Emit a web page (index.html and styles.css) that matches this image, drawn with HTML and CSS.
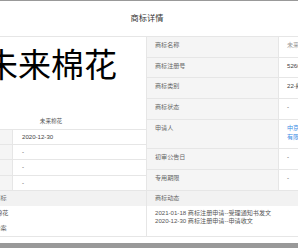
FILE: index.html
```html
<!DOCTYPE html>
<html lang="zh-CN">
<head>
    <meta charset="UTF-8">
    <meta name="viewport" content="width=device-width, initial-scale=1.0">
    <title>商标详情</title>
    <link rel="stylesheet" href="styles.css">
</head>
<body>
    <div class="modal">
        <div class="modal-header">商标详情</div>

        <div class="detail">
            <div class="detail-left">
                <div class="mark-image">
                    <div class="mark-text">未来棉花</div>
                    <div class="mark-caption">未来棉花</div>
                </div>
                <div class="info info-left">
                    <div class="info-label">申请日期</div>
                    <div class="info-value">2020-12-30</div>
                    <div class="info-label">注册公告日</div>
                    <div class="info-value">-</div>
                    <div class="info-label">国际注册日</div>
                    <div class="info-value">-</div>
                    <div class="info-label">后期指定日</div>
                    <div class="info-value">-</div>
                </div>
            </div>

            <div class="info info-right">
                <div class="info-label">商标名称</div>
                <div class="info-value muted">未来棉花</div>
                <div class="info-label">商标注册号</div>
                <div class="info-value">52600000</div>
                <div class="info-label">商标类别</div>
                <div class="info-value">22-绳网袋篷</div>
                <div class="info-label">商标状态</div>
                <div class="info-value">-</div>
                <div class="info-label">申请人</div>
                <div class="info-value link">中京纺织品科技有限公司</div>
                <div class="info-label">初审公告日</div>
                <div class="info-value">-</div>
                <div class="info-label">专用期限</div>
                <div class="info-value">-</div>
            </div>
        </div>

        <div class="extra">
            <div class="extra-box">
                <div class="extra-title">申请人其他商标</div>
                <div class="extra-body spaced">
                    <p>中京牌 未来棉花</p>
                    <p>已申请商标备案</p>
                </div>
            </div>
            <div class="extra-box">
                <div class="extra-title">商标动态</div>
                <div class="extra-body">
                    <p>2021-01-18 商标注册申请--受理通知书发文</p>
                    <p>2020-12-30 商标注册申请--申请收文</p>
                </div>
            </div>
        </div>
    </div>
</body>
</html>
```

FILE: styles.css
```css
html, body {
    overflow: hidden;
}

body {
    margin: 0;
    height: 248px;
    background-color: #999999; /* backdrop behind the dialog */
    font-family: 'Liberation Sans', 'Noto Sans CJK SC', sans-serif;
    font-size: 6.1px;
    color: #444444;
}

p {
    margin: 0;
}

.modal {
    width: 382px;
    margin: 1px 0 0 -44px;
    padding-bottom: 6px;
    background-color: #ffffff;
}

.modal-header {
    height: 36px;
    box-sizing: border-box;
    padding-top: 12px;
    border-bottom: 1px solid #e6e6e6;
    text-align: center;
    font-family: 'Noto Sans CJK SC', sans-serif;
    font-size: 8.2px;
    line-height: 9px;
    color: #333333;
}

/* Top part: mark picture + two info tables */
.detail {
    display: grid;
    grid-template-columns: 191px 191px;
}

.detail-left {
    border-right: 1px solid #e6e6e6;
}

.mark-image {
    height: 93px;
    box-sizing: border-box;
    display: flex;
    flex-direction: column;
    align-items: center;
    padding: 9px 0 4px;
    border-bottom: 1px solid #e6e6e6;
}

.mark-text {
    font-family: 'Noto Sans CJK SC', sans-serif;
    font-size: 33px;
    line-height: 34px;
    color: #000000;
    white-space: nowrap;
}

.mark-caption {
    margin-top: auto;
    font-size: 5.6px;
    line-height: 8px;
    color: #555555;
}

.info {
    display: grid;
}

.info-left {
    grid-template-columns: 57px 133px;
}

.info-right {
    grid-template-columns: 132px 59px;
}

.info-label,
.info-value {
    padding: 3px 8px;
    border-bottom: 1px solid #e6e6e6;
    white-space: nowrap;
}

.info-label {
    background-color: #f5f5f5;
    border-right: 1px solid #e6e6e6;
    color: #666666;
}

.info-left .info-label,
.info-left .info-value {
    line-height: 8.2px;
}

.info-left .info-value {
    padding-left: 9px;
}

.info-right .info-label,
.info-right .info-value {
    line-height: 9.2px;
}

.info-value.muted {
    color: #999999;
}

.info-value.link {
    white-space: normal;
    color: #3a8ee6; /* applicant shown as a link */
}

/* Bottom part: related marks + status history */
.extra {
    display: grid;
    grid-template-columns: 191px 191px;
}

.extra-box {
    display: flex;
    flex-direction: column;
    border-bottom: 1px solid #e6e6e6;
}

.extra-box:first-child {
    border-right: 1px solid #e6e6e6;
}

.extra-title {
    padding: 3.5px 8px;
    line-height: 8px;
    background-color: #f2f2f2;
    color: #666666;
    white-space: nowrap;
}

.extra-body {
    flex: 1;
    padding: 3px 8px 4px;
    line-height: 8px;
    color: #555555;
    white-space: nowrap;
}

.extra-body.spaced {
    display: flex;
    flex-direction: column;
    gap: 7px;
}
```
